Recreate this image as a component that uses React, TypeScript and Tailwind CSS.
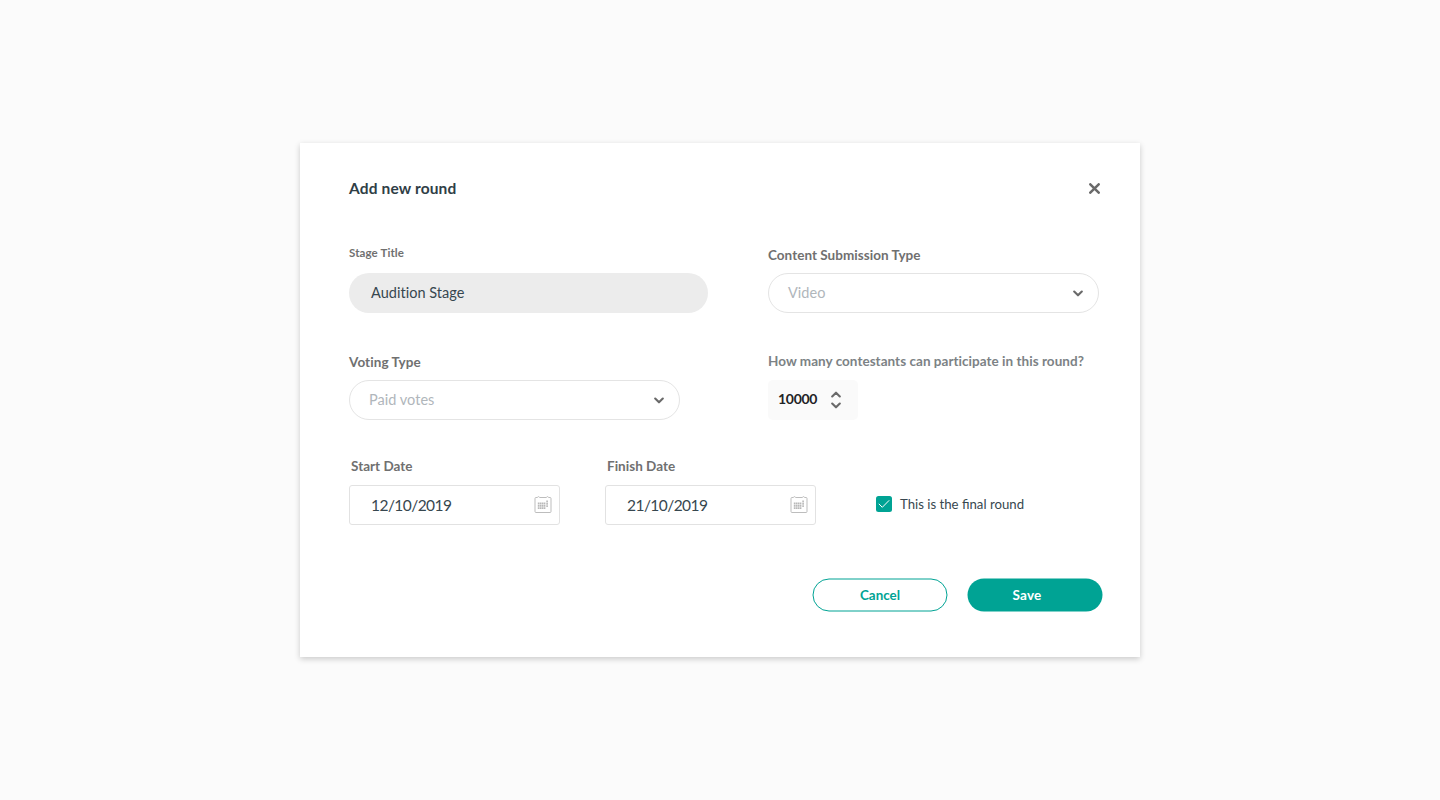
import React from "react";

function Chevron({ up = false }: { up?: boolean }) {
  return (
    <svg width="10" height="7" viewBox="0 0 10 7" fill="none" stroke="#6a6a6a" strokeWidth="2.1" strokeLinecap="round" strokeLinejoin="round">
      {up ? <path d="M1.2 5.5 5 1.7l3.8 3.8" /> : <path d="M1.2 1.5 5 5.3l3.8-3.8" />}
    </svg>
  );
}

function Calendar() {
  return (
    <svg className="-mt-px" width="18" height="19" viewBox="0 0 18 19" fill="none" stroke="#bdbdbd">
      <path d="M3.2 2.5H2a1 1 0 0 0-1 1v13a1 1 0 0 0 1 1h14a1 1 0 0 0 1-1v-13a1 1 0 0 0-1-1h-1.2M5.8 2.5h6.4" />
      <path d="M3.2 2.5q1.3-1.8 2.6 0M12.2 2.5q1.3-1.8 2.6 0" />
      <path
        d="M3.8 8.5h7.6M3.8 10.8h7.6M3.8 13.1h7.6M12.3 6.5h1.8M12.3 8.8h1.8M12.3 11.1h1.8"
        strokeWidth="1.8"
        strokeDasharray="1.6 .4"
        stroke="#b9b9b9"
      />
    </svg>
  );
}

function Select({ value }: { value: string }) {
  return (
    <div className="flex h-10 w-[331px] items-center justify-between rounded-full border border-[#e4e4e4] pr-[15px] pl-[19px]">
      <span className="text-[14.5px] leading-5 tracking-[0.03px] text-[#b0b6bb]">{value}</span>
      <Chevron />
    </div>
  );
}

function DateField({ label, value }: { label: string; value: string }) {
  return (
    <div className="w-[211px]">
      <div className="h-7 pl-0.5 text-[13.5px] leading-[18px] font-bold tracking-[0.02px] text-[#707070]">{label}</div>
      <div className="flex h-10 items-center justify-between rounded-[3px] border border-[#e2e2e2] pr-[7px] pl-[21px]">
        <span className="text-[15.5px] leading-5 tracking-[-0.55px] text-[#37474f]">{value}</span>
        <Calendar />
      </div>
    </div>
  );
}

export default function App() {
  return (
    <main className="flex h-screen items-center justify-center bg-[#fbfbfb] font-['Lato','Open_Sans',sans-serif] whitespace-nowrap">
      <section className="h-[514px] w-[840px] bg-white pt-9 pl-[49px] shadow-[0_2px_6px_rgba(0,0,0,0.2)]">
        <header className="flex h-5 items-center justify-between pr-10">
          <h1 className="pb-0.5 text-[15.5px] leading-5 font-bold tracking-[0.15px] text-[#2f3e46]">Add new round</h1>
          <button className="pb-px" aria-label="Close">
            <svg width="11" height="11" viewBox="0 0 11 11" stroke="#6a6a6a" strokeWidth="2.5" strokeLinecap="round">
              <path d="m1.3 1.3 8.4 8.4m0-8.4-8.4 8.4" />
            </svg>
          </button>
        </header>

        <div className="mt-[46px] grid grid-cols-[359px_331px] gap-x-[60px]">
          <div>
            <div className="h-7 text-[11.5px] leading-[15px] font-bold tracking-[0.12px] text-[#707070]">Stage Title</div>
            <div className="flex h-10 items-center rounded-full bg-[#ececec] pl-[22px] text-[14.5px] leading-5 tracking-[0.03px] text-[#37474f]">
              Audition Stage
            </div>
          </div>
          <div>
            <div className="h-7 text-[13.5px] leading-5 font-bold tracking-[0.03px] text-[#707070]">Content Submission Type</div>
            <Select value="Video" />
          </div>
        </div>

        <div className="mt-[39px] grid grid-cols-[359px_331px] gap-x-[60px]">
          <div>
            <div className="h-7 text-[13.5px] leading-5 font-bold tracking-[0.08px] text-[#707070]">Voting Type</div>
            <Select value="Paid votes" />
          </div>
          <div>
            <div className="h-7 text-[13.5px] leading-[18px] font-bold tracking-[0.035px] text-[#7c8285]">
              How many contestants can participate in this round?
            </div>
            <div className="flex h-10 w-[90px] items-center justify-between rounded-[5px] bg-[#fafafa] pr-[17px] pl-2.5">
              <span className="pb-0.5 text-[14px] leading-5 font-bold tracking-[-0.3px] text-[#1f2326]">10000</span>
              <span className="flex flex-col gap-[4px]">
                <Chevron up />
                <Chevron />
              </span>
            </div>
          </div>
        </div>

        <div className="mt-[37px] flex">
          <DateField label="Start Date" value="12/10/2019" />
          <div className="ml-[45px]">
            <DateField label="Finish Date" value="21/10/2019" />
          </div>
          <label className="mt-[39px] ml-[60px] flex h-4 items-center gap-2">
            <span className="flex size-4 items-center justify-center rounded-[2.5px] bg-[#00a394]">
              <svg width="12" height="10" viewBox="0 0 12 10" fill="none" stroke="#fff">
                <path d="M.8 4.8 4.3 8.3 11.2 1.3" />
              </svg>
            </span>
            <span className="text-[13.2px] leading-5 text-[#37474f]">This is the final round</span>
          </label>
        </div>

        <div className="mt-[53px] flex translate-x-[0.5px] translate-y-[0.5px] gap-5 pl-[463px]">
          <button className="h-[33px] w-[135px] rounded-full border border-[#00a394] pb-0.5 text-[13.4px] leading-5 font-bold text-[#00a394]">
            Cancel
          </button>
          <button className="h-[33px] w-[135px] rounded-full bg-[#00a394] pr-4 pb-0.5 text-[13.5px] leading-5 font-bold tracking-[0.2px] text-white">
            Save
          </button>
        </div>
      </section>
    </main>
  );
}
